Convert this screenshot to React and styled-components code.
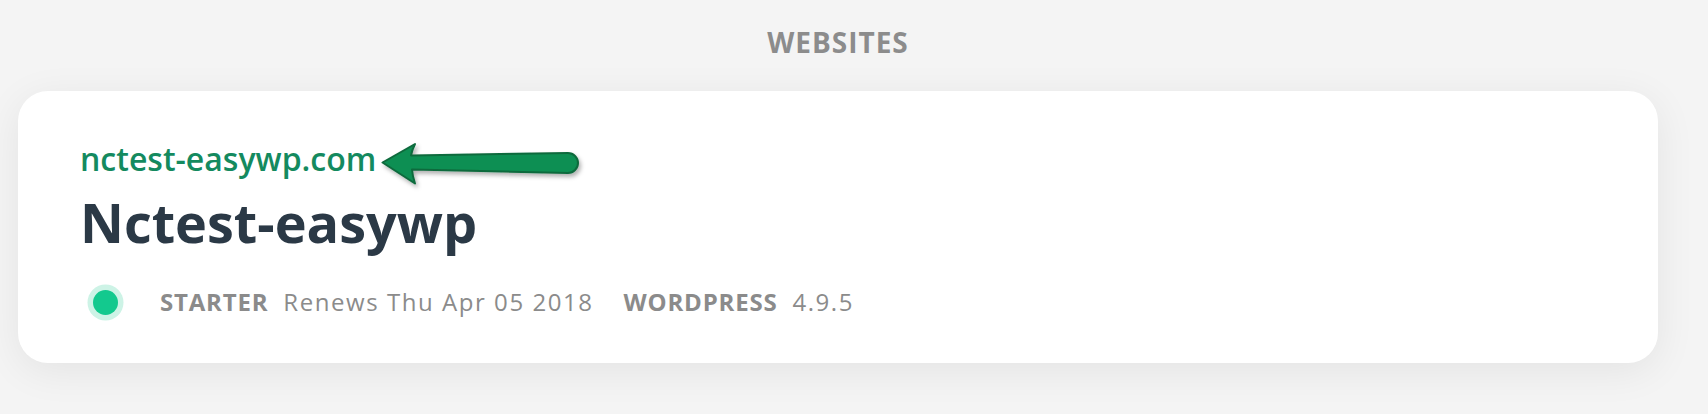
import React from 'react';
import styled, { createGlobalStyle } from 'styled-components';

const GlobalStyle = createGlobalStyle`
  body {
    margin: 0;
    background: #f4f4f4;
    font-family: 'Open Sans', 'Liberation Sans', sans-serif;
  }
`;

const site = {
  domain: 'nctest-easywp.com',
  name: 'Nctest-easywp',
  plan: 'Starter',
  renews: 'Renews Thu Apr 05 2018',
  platform: 'WordPress',
  version: '4.9.5',
};

const App = () => {
  return (
    <Page>
      <GlobalStyle />
      <Section>
        <Heading>Websites</Heading>
        <Card>
          <Domain>
            {site.domain}
            <Pointer />
          </Domain>
          <Title>{site.name}</Title>
          <Meta>
            <Status />
            <Label>{site.plan}</Label>
            <Value>{site.renews}</Value>
            <Label $gap>{site.platform}</Label>
            <Value>{site.version}</Value>
          </Meta>
        </Card>
      </Section>
    </Page>
  );
};

export default App;

// green annotation arrow pointing at the domain
const Pointer = () => (
  <Arrow width='216' height='62' viewBox='0 0 216 62'>
    <defs>
      <filter id='arrowShadow' x='-10%' y='-30%' width='120%' height='170%'>
        <feDropShadow dx='2' dy='3' stdDeviation='2' floodColor='#000' floodOpacity='0.3' />
      </filter>
    </defs>
    <path
      d='M8.5 27.5 L41 9 Q38 15 37 20.5 L194 18 A10 10 0 0 1 194 38 L38 34.5 Q38.5 41 41 48.5 Z'
      fill='#0b8f52'
      stroke='#0f6a3d'
      strokeWidth='2'
      strokeLinejoin='round'
      filter='url(#arrowShadow)'
    />
  </Arrow>
);

const Page = styled.div`
  min-height: 100vh;
  background: #f4f4f4;
`;

const Section = styled.div`
  width: 1640px;
  margin-left: 18px;
  padding-top: 28px;
`;

const Heading = styled.h2`
  margin: 0 0 35px;
  text-align: center;
  font-size: 28px;
  line-height: 28px;
  font-weight: 700;
  letter-spacing: 1px;
  text-transform: uppercase;
  color: #8c8c8c;
`;

const Card = styled.div`
  height: 272px;
  box-sizing: border-box;
  padding: 52px 62px 0;
  background: #fff;
  border-radius: 30px;
  box-shadow: 0 8px 40px rgba(0, 0, 0, 0.07);
`;

const Domain = styled.div`
  position: relative;
  display: inline-block;
  font-size: 32px;
  line-height: 32px;
  font-weight: 600;
  color: #148a5f;
`;

const Arrow = styled.svg`
  position: absolute;
  left: calc(100% - 2px);
  top: -8px;
  overflow: visible;
`;

const Title = styled.h1`
  margin: 19px 0 0;
  font-size: 54px;
  line-height: 54px;
  font-weight: 700;
  color: #2b3946;
`;

const Meta = styled.div`
  display: flex;
  align-items: center;
  height: 36px;
  margin-top: 35px;
`;

const Status = styled.span`
  width: 25px;
  height: 25px;
  margin: 0 42px 0 13px;
  border-radius: 50%;
  background: #13c98e;
  box-shadow: 0 0 0 5.5px #cdf3e6;
`;

const Label = styled.span`
  margin-left: ${(p) => (p.$gap ? '30px' : '0')};
  margin-right: 15px;
  font-size: 24px;
  line-height: 36px;
  font-weight: 700;
  letter-spacing: 0.8px;
  text-transform: uppercase;
  color: #8b8b8b;
`;

const Value = styled.span`
  font-size: 24px;
  line-height: 36px;
  font-weight: 400;
  letter-spacing: 1.55px;
  color: #8b8b8b;
`;
